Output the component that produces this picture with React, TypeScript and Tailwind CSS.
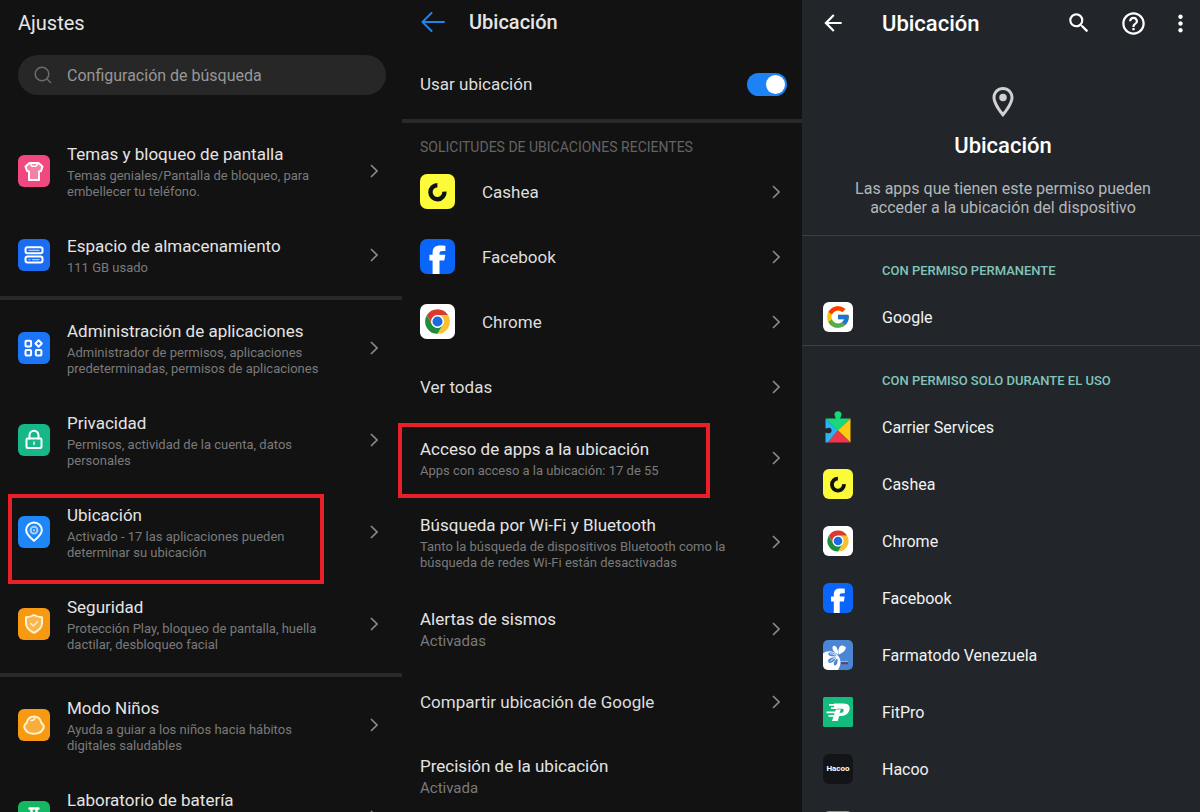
import type { ReactNode } from "react";
import { FcGoogle } from "react-icons/fc";
import {
  MdArrowBack,
  MdHelpOutline,
  MdMoreVert,
  MdOutlineLocationOn,
  MdSearch,
} from "react-icons/md";

/* ---------- shared drawings ---------- */

function Chevron() {
  return (
    <svg viewBox="0 0 8 14" className="h-[14px] w-2 shrink-0" fill="none" stroke="#8a8a8a" strokeWidth="1.6" aria-hidden="true">
      <path d="M1 1 L7 7 L1 13" />
    </svg>
  );
}

function CasheaIcon() {
  return (
    <svg viewBox="0 0 35 35" className="size-full" aria-hidden="true">
      <rect width="35" height="35" rx="7" fill="#fbfb3a" />
      <path d="M17.4 11.2 A7 7 0 1 0 24.4 17.6" fill="none" stroke="#111" strokeWidth="4.4" />
    </svg>
  );
}

function FacebookIcon() {
  return (
    <svg viewBox="0 0 35 35" className="size-full" aria-hidden="true">
      <rect width="35" height="35" rx="7" fill="#0a66fb" />
      <path
        d="M12.6 35V21.6H9.4v-5.9h3.2v-2.1c0-5 2.4-7.2 7.6-7.2 2.2 0 3.8.1 5.2.4v5.2h-3c-2.2 0-2.9.8-2.9 2.6v1.1h5.8l-1 5.9h-4.8V35z"
        fill="#fff"
      />
    </svg>
  );
}

function ChromeIcon() {
  return (
    <svg viewBox="-10 -10 68 68" className="size-full" aria-hidden="true">
      <rect x="-10" y="-10" width="68" height="68" rx="13" fill="#fff" />
      <path d="M24 12h20.78A23.994 23.994 0 0 0 3.217 12.003L13.608 30A12 12 0 0 1 24 12z" fill="#d93b2f" />
      <path d="M34.391 30.003 24.001 48A23.994 23.994 0 0 0 44.78 12.003H24a12 12 0 0 1 10.391 18z" fill="#fbc02d" />
      <path d="M13.609 30.003 3.218 12.006A23.994 23.994 0 0 0 24.001 48l10.39-17.997a12 12 0 0 1-20.782 0z" fill="#1e8e3e" />
      <circle cx="24" cy="24" r="12.5" fill="#fff" />
      <circle cx="24" cy="24" r="9.8" fill="#1a6be0" />
    </svg>
  );
}

function GoogleIcon() {
  return (
    <span className="flex size-full items-center justify-center rounded-md bg-white">
      <FcGoogle className="size-[26px]" aria-hidden="true" />
    </span>
  );
}

function CarrierIcon() {
  return (
    <svg viewBox="0 0 30 34" className="h-[34px] w-[30px] shrink-0" aria-hidden="true">
      <path d="M2.5 8.500h25L15 21z" fill="#16d97b" />
      <path d="M13.200 9.500c0-1.800-1.700-2.800-1.700-4.700a3.500 3.500 0 0 1 7 0c0 1.900-1.700 2.900-1.700 4.700z" fill="#16d97b" />
      <path d="M27.500 8.500v24L15 20.500z" fill="#fdc912" />
      <path d="M2.500 8.500 15 20.500 5 32.500H2.500z" fill="#2bb4f0" />
      <path d="M4.500 32.500 15 20.500l12.500 12z" fill="#f0364a" />
      <path d="M2 18.600c1.400 0 2.300-.900 3.800-.900a2.800 2.800 0 0 1 0 5.600c-1.500 0-2.400-.900-3.800-.900z" fill="#22262a" />
    </svg>
  );
}

function FarmatodoIcon() {
  return (
    <svg viewBox="0 0 30 30" className="size-full" aria-hidden="true">
      <clipPath id="farmatodo-tile">
        <rect width="30" height="30" rx="5" />
      </clipPath>
      <g clipPath="url(#farmatodo-tile)">
        <rect width="30" height="30" fill="#4a86d4" />
        <path d="M0 13.500c3-2.800 8.500-3 12-.500 3.500 2.300 5.500 5.500 5.500 9 0 3-1 5.500-2.500 8H0z" fill="#fff" />
        <path d="M15 14.500c-4-2.300-6.300-5.200-5.300-7.700C10.700 4.500 15 5.500 15.200 14.500z" fill="#fff" />
        <path d="M15.800 14.500c-1.300-4 .200-8.500 3-9 1.200-.200 2 .400 2.200 1.200.800-.400 1.800 0 1.800 1.300 0 2.500-3.500 5-7 6.500z" fill="#fff" />
        <path d="M13.500 16.300c-2-4-6.500-5.200-8-3-1.400 2.500 3.500 3.500 8 3z" fill="#4a86d4" />
        <path d="M13 17.800c-4.500-.800-8.500 1.200-7.800 4 1 2.700 6.300.500 7.800-4z" fill="#4a86d4" />
        <path d="M14.300 18.500c-3 2-4.500 5-3 6.700 2 1.300 4.200-3 3-6.700z" fill="#4a86d4" />
        <path d="M7 13.700c2 0 4 .700 5.300 1.900M7 21.500c1.200-1.600 3-2.600 4.800-3.100" stroke="#fff" strokeWidth=".8" fill="none" />
        <path d="M18 21h7v1h-7z" fill="#c9b06a" />
        <path d="M18 22h7v.8h-7z" fill="#2b4a91" />
        <path d="M18 22.800h7v1.500h-7z" fill="#a32a3c" />
      </g>
    </svg>
  );
}

function FitProIcon() {
  return (
    <svg viewBox="0 0 30 30" className="size-full" aria-hidden="true">
      <rect width="30" height="30" rx="1.500" fill="#13bb7c" />
      <path d="M11 6.500h9.500c5 0 6.800 2.800 5.900 6.300-1 4-4 6.200-8 6.200h-2.200L14.700 24H9l3.800-11.500h5l-1.200 3.300h1.500c1.300 0 2.200-.700 2.500-1.900.4-1.400-.3-2.200-1.600-2.200H11z" fill="#fff" />
      <path d="M6 7.800h7M8 11.200h6M3.500 15.300h9M5.500 18.800h7" stroke="#fff" strokeWidth="1.700" />
    </svg>
  );
}

function HacooIcon() {
  return (
    <span className="flex size-full items-center justify-center rounded-md bg-[#121417] text-[8px] leading-none font-bold text-white">
      Hacoo
    </span>
  );
}

/* ---------- first panel ---------- */

function Tile({ fill, tint = "#fff", children }: { fill: string; tint?: string; children: ReactNode }) {
  return (
    <svg viewBox="0 0 32 32" className="size-8 shrink-0" fill="none" stroke={tint} strokeWidth="2" strokeLinejoin="round" strokeLinecap="round" aria-hidden="true">
      <rect width="32" height="32" rx="6" fill={fill} stroke="none" />
      {children}
    </svg>
  );
}

const shirt = (
  <Tile fill="#f0487f">
    <path d="M11.500 8h9l4 3.500-1.500 4.500-2 .500V25h-10v-8.500L9 16l-1.500-4.500z" fill="#f79ab8" fillOpacity=".7" />
    <path d="M12.500 9c1 3.200 6 3.200 7 0" strokeWidth="1.300" />
  </Tile>
);
const storage = (
  <Tile fill="#1a6df2">
    <rect x="7.500" y="8.300" width="17" height="6" rx="2" />
    <rect x="7.500" y="17.600" width="17" height="6" rx="2" />
    <path d="M11 11.300h10M11 20.600h1M14.500 20.600H21" stroke="#a9caff" strokeWidth="1.300" />
  </Tile>
);
const apps = (
  <Tile fill="#1c74f6">
    <rect x="7.500" y="8.800" width="5.600" height="5.600" rx="1" />
    <rect x="7.500" y="18" width="5.600" height="5.600" rx="1" />
    <rect x="17.800" y="18" width="5.600" height="5.600" rx="1" />
    <path d="m20.600 8.200 3.200 3.300-3.200 3.300-3.200-3.300z" />
  </Tile>
);
const lock = (
  <Tile fill="#16b88a">
    <path d="M11.500 14.500v-3.300a4.500 4.500 0 0 1 9 0v3.300" />
    <rect x="8.500" y="14.500" width="15" height="9.500" rx="1.300" />
    <path d="M16 18.200v2" stroke="#a5ecd4" />
  </Tile>
);
const pin = (
  <Tile fill="#1d86f8">
    <path d="M16 24.800c-4-3.400-7.800-6.500-7.800-10.600a7.800 7.800 0 0 1 15.600 0c0 4.100-3.800 7.200-7.800 10.600z" />
    <circle cx="16" cy="14.200" r="3.400" fill="#1d86f8" stroke="#a8d2ff" />
    <circle cx="16" cy="14.200" r="1" fill="#cfe6ff" stroke="none" />
  </Tile>
);
const shield = (
  <Tile fill="#f79a12" tint="#fff3cf">
    <path d="M16 7c2.500 1.500 5 2 8 2.300v6.200c0 4.500-3.600 7.200-8 9.300-4.400-2.100-8-4.800-8-9.300V9.300c3-.300 5.500-.800 8-2.300z" fill="#fac06a" fillOpacity=".7" />
    <path d="m12.800 15.500 2.500 2.500 4-4.100" stroke="#ffe9bf" strokeWidth="1.700" />
  </Tile>
);
const kids = (
  <Tile fill="#f79a12" tint="#fff3cf">
    <path d="M16 7.500c4.300 0 6.600 3 7.300 6.300 2 1.700 3 3.400 2.200 5.300-1.400 3.600-5.300 5.600-9.500 5.600s-8.100-2-9.500-5.600c-.8-1.900.2-3.600 2.200-5.300.7-3.300 3-6.300 7.300-6.300z" fill="#fac06a" fillOpacity=".5" />
    <path d="M17 8c0 2.200-1.500 3.700-4 3.500" strokeWidth="1.500" />
  </Tile>
);
const flask = (
  <Tile fill="#14b860">
    <path d="M11.500 7.500h9M13.500 8v6l-4 8.500c-.500 1.200.200 2 1.300 2h10.400c1.100 0 1.800-.800 1.300-2l-4-8.500V8" strokeWidth="2.400" />
  </Tile>
);

function SettingRow({ icon, title, detail, marked }: { icon: ReactNode; title: string; detail?: string; marked?: boolean }) {
  return (
    <a href="#" className={`relative flex items-center pr-6 pl-[18px] ${detail ? "" : "min-h-[92px]"}`}>
      {icon}
      <span className="flex flex-1 flex-col gap-[2px] self-start py-[17px] pl-[17px]">
        <span className="text-[17px] leading-6 text-[#e4e4e4]">{title}</span>
        {detail && <span className="text-[13px] leading-4 whitespace-pre-line text-[#7a7a7a]">{detail}</span>}
      </span>
      <Chevron />
      {marked && (
        <span className="pointer-events-none absolute top-2 -bottom-[6px] left-2 w-[316px] border-4 border-[#ea1f28]" />
      )}
    </a>
  );
}

function Band() {
  return <div className="mt-[3px] mb-[2px] h-1 bg-[#292929]" />;
}

function SettingsPanel() {
  return (
    <section className="bg-[#121212]">
      <h1 className="px-[18px] text-[20px] leading-[46px] text-[#e6e6e6]">Ajustes</h1>
      <label className="mr-4 ml-[18px] mt-[9px] mb-[30px] flex h-10 items-center rounded-full bg-[#272727] pl-4">
        <svg viewBox="0 0 18 18" className="size-[18px] shrink-0" fill="none" stroke="#6d6d6d" strokeWidth="1.500" aria-hidden="true">
          <circle cx="8" cy="8" r="6.800" />
          <path d="m13 13 4 4" />
        </svg>
        <input
          type="search"
          aria-label="Configuración de búsqueda"
          placeholder="Configuración de búsqueda"
          className="ml-[15px] min-w-0 flex-1 bg-transparent pt-[2px] text-[16px] text-[#e4e4e4] outline-none placeholder:text-[#979797]"
        />
      </label>
      <nav>
        <SettingRow icon={shirt} title="Temas y bloqueo de pantalla" detail={"Temas geniales/Pantalla de bloqueo, para\nembellecer tu teléfono."} />
        <SettingRow icon={storage} title="Espacio de almacenamiento" detail="111 GB usado" />
        <Band />
        <SettingRow icon={apps} title="Administración de aplicaciones" detail={"Administrador de permisos, aplicaciones\npredeterminadas, permisos de aplicaciones"} />
        <SettingRow icon={lock} title="Privacidad" detail={"Permisos, actividad de la cuenta, datos\npersonales"} />
        <SettingRow icon={pin} title="Ubicación" detail={"Activado - 17 las aplicaciones pueden\ndeterminar su ubicación"} marked />
        <SettingRow icon={shield} title="Seguridad" detail={"Protección Play, bloqueo de pantalla, huella\ndactilar, desbloqueo facial"} />
        <Band />
        <SettingRow icon={kids} title="Modo Niños" detail={"Ayuda a guiar a los niños hacia hábitos\ndigitales saludables"} />
        <SettingRow icon={flask} title="Laboratorio de batería" />
      </nav>
    </section>
  );
}

/* ---------- second panel ---------- */

function LinkRow({ title, icon }: { title: string; icon?: ReactNode }) {
  return (
    <a href="#" className="flex h-[65px] items-center pr-[22px] pb-[2px] pl-[18px]">
      {icon && <span className="mr-[27px] size-[35px] shrink-0">{icon}</span>}
      <span className="flex-1 text-[17px] leading-6 text-[#dedede]">{title}</span>
      <Chevron />
    </a>
  );
}

function DetailRow({ title, detail, marked }: { title: string; detail: string; marked?: boolean }) {
  return (
    <a href="#" className="relative flex items-center py-[17px] pr-[22px] pl-[18px]">
      <span className="flex flex-1 flex-col gap-[2px]">
        <span className="text-[17px] leading-6 text-[#e4e4e4]">{title}</span>
        <span className="text-[13px] leading-4 whitespace-pre-line text-[#7a7a7a]">{detail}</span>
      </span>
      <Chevron />
      {marked && (
        <span className="pointer-events-none absolute top-[3px] -bottom-[2px] -left-1 w-[312px] border-4 border-[#ea1f28]" />
      )}
    </a>
  );
}

function StatusRow({ title, status, chevron = true }: { title: string; status: string; chevron?: boolean }) {
  return (
    <a href="#" className="flex items-center py-[19px] pr-[22px] pl-[18px]">
      <span className="flex flex-1 flex-col">
        <span className="text-[17px] leading-6 text-[#e4e4e4]">{title}</span>
        <span className="text-[15px] leading-5 text-[#7a7a7a]">{status}</span>
      </span>
      {chevron && <Chevron />}
    </a>
  );
}

function LocationPanel() {
  return (
    <section className="relative bg-[#121212]">
      <header className="flex h-11 items-center pl-[19px]">
        <button type="button" aria-label="Atrás" className="mr-6">
          <svg viewBox="0 0 24 20" className="h-5 w-6" fill="none" stroke="#2483ea" strokeWidth="2" strokeLinecap="round" strokeLinejoin="round" aria-hidden="true">
            <path d="M23 10H1.500M10.500 1 1.500 10l9 9" />
          </svg>
        </button>
        <h2 className="text-[20px] leading-6 font-medium text-[#e6e6e6]">Ubicación</h2>
      </header>
      <label className="flex h-[75px] items-center justify-between pt-[5px] pr-[15px] pl-[18px]">
        <span className="text-[17px] leading-6 text-[#dedede]">Usar ubicación</span>
        <input
          type="checkbox"
          role="switch"
          defaultChecked
          className="flex h-[23px] w-10 appearance-none items-center rounded-full bg-[#555] px-[2px] before:block before:size-[19px] before:rounded-full before:bg-white checked:justify-end checked:bg-[#1c82f5]"
        />
      </label>
      <div className="h-1 bg-[#292929]" />
      <h3 className="px-[18px] pt-[14px] pb-[3px] text-[14px] leading-5 text-[#646464]">SOLICITUDES DE UBICACIONES RECIENTES</h3>
      <nav>
        <LinkRow title="Cashea" icon={<CasheaIcon />} />
        <LinkRow title="Facebook" icon={<FacebookIcon />} />
        <LinkRow title="Chrome" icon={<ChromeIcon />} />
        <LinkRow title="Ver todas" />
        <DetailRow title="Acceso de apps a la ubicación" detail="Apps con acceso a la ubicación: 17 de 55" marked />
        <DetailRow title="Búsqueda por Wi-Fi y Bluetooth" detail={"Tanto la búsqueda de dispositivos Bluetooth como la\nbúsqueda de redes Wi-Fi están desactivadas"} />
        <StatusRow title="Alertas de sismos" status="Activadas" />
        <LinkRow title="Compartir ubicación de Google" />
        <StatusRow title="Precisión de la ubicación" status="Activada" chevron={false} />
      </nav>
    </section>
  );
}

/* ---------- third panel ---------- */

function AppRow({ name, icon }: { name?: string; icon: ReactNode }) {
  return (
    <li>
      <a href="#" className="flex h-[57px] items-center pl-[21px]">
        <span className="flex size-[30px] shrink-0 items-center justify-center">{icon}</span>
        <span className="pt-[2px] pl-[29px] text-[16px] leading-6 text-[#f1f2f3]">{name}</span>
      </a>
    </li>
  );
}

function GroupTitle({ children }: { children: ReactNode }) {
  return <h3 className="border-t border-[#3b3f43] pt-[25px] pb-[7px] pl-20 text-[13px] leading-5 font-medium text-[#83c4ba]">{children}</h3>;
}

function PermissionPanel() {
  return (
    <section className="relative bg-[#22262a]">
      <header className="flex h-12 items-center pr-[6px] pl-[18px] text-white">
        <button type="button" aria-label="Atrás" className="pb-[2px]">
          <MdArrowBack className="size-[26px]" />
        </button>
        <h2 className="flex-1 pl-9 text-[22px] leading-7 font-medium">Ubicación</h2>
        <button type="button" aria-label="Buscar" className="mr-7 pb-[2px]">
          <MdSearch className="size-[26px]" />
        </button>
        <button type="button" aria-label="Ayuda" className="mr-5 pb-[2px]">
          <MdHelpOutline className="size-[27px]" />
        </button>
        <button type="button" aria-label="Más opciones" className="pb-[2px]">
          <MdMoreVert className="size-[27px]" />
        </button>
      </header>
      <div className="flex flex-col items-center pt-9 pr-[38px] pb-[18px] pl-[42px] text-center">
        <MdOutlineLocationOn className="size-9 text-[#cfd1d4]" aria-hidden="true" />
        <h2 className="mt-3 text-[22px] leading-7 font-medium text-white">Ubicación</h2>
        <p className="mt-[19px] max-w-[310px] text-[16px] leading-[19px] text-[#b4b7ba]">
          Las apps que tienen este permiso pueden acceder a la ubicación del dispositivo
        </p>
      </div>
      <GroupTitle>CON PERMISO PERMANENTE</GroupTitle>
      <ul>
        <AppRow name="Google" icon={<GoogleIcon />} />
      </ul>
      <GroupTitle>CON PERMISO SOLO DURANTE EL USO</GroupTitle>
      <ul>
        <AppRow name="Carrier Services" icon={<CarrierIcon />} />
        <AppRow name="Cashea" icon={<CasheaIcon />} />
        <AppRow name="Chrome" icon={<ChromeIcon />} />
        <AppRow name="Facebook" icon={<FacebookIcon />} />
        <AppRow name="Farmatodo Venezuela" icon={<FarmatodoIcon />} />
        <AppRow name="FitPro" icon={<FitProIcon />} />
        <AppRow name="Hacoo" icon={<HacooIcon />} />
        <AppRow icon={<span className="size-full rounded-md bg-[#8d8f91]" />} />
      </ul>
    </section>
  );
}

export default function App() {
  return (
    <main className="grid h-screen grid-cols-[402fr_400fr_398fr] overflow-hidden bg-[#121212] font-[Roboto,'Liberation_Sans',sans-serif]">
      <SettingsPanel />
      <LocationPanel />
      <PermissionPanel />
    </main>
  );
}
